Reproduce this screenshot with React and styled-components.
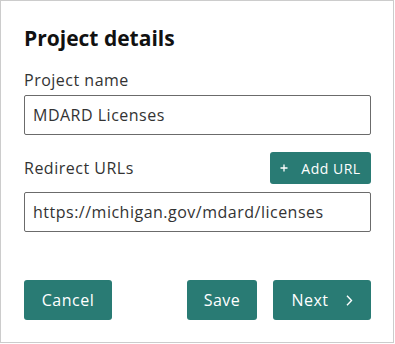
import React from 'react';
import styled, {createGlobalStyle} from 'styled-components';

const teal = '#297b74';

const Global = createGlobalStyle`
  body {
    margin: 0;
    background: #fff;
    font-family: "Open Sans", Arial, sans-serif;
  }
`;

const Card = styled.div`
  box-sizing: border-box;
  width: 394px;
  height: 343px;
  border: 1px solid #cccccc;
  padding: 23px 22px 0 23px;
  display: flex;
  flex-direction: column;
  color: #333;
`;

const Title = styled.h2`
  margin: 0 0 16px;
  font-size: 21px;
  line-height: 28px;
  font-weight: 700;
  color: #111;
`;

const Label = styled.label`
  font-size: 16px;
  line-height: 24px;
  letter-spacing: 0.5px;
  color: #333;
`;

const Input = styled.input`
  box-sizing: border-box;
  width: 100%;
  height: 40px;
  margin-top: ${p => p.$top || 0}px;
  padding: 0 8px;
  border: 1px solid #6b6b6b;
  border-radius: 2px;
  font-family: inherit;
  font-size: 16px;
  letter-spacing: 0.5px;
  color: #333;
  outline: none;
`;

const Row = styled.div`
  display: flex;
  align-items: center;
  justify-content: space-between;
  margin-top: 17px;
`;

const Button = styled.button`
  box-sizing: border-box;
  display: inline-flex;
  align-items: center;
  justify-content: center;
  gap: ${p => p.$gap || 0}px;
  width: ${p => p.$w}px;
  height: ${p => (p.$small ? 32 : 40)}px;
  padding: 0;
  border: none;
  border-radius: 3px;
  background: ${teal};
  color: #fff;
  font-family: inherit;
  font-size: ${p => (p.$small ? 14 : 16)}px;
  letter-spacing: 0.5px;
  cursor: pointer;
`;

const Footer = styled.div`
  display: flex;
  align-items: center;
  margin-top: 48px;
`;

const Spacer = styled.div`
  flex: 1;
`;

const Group = styled.div`
  display: flex;
  gap: 16px;
`;

const Plus = () => (
    <svg width="8" height="8" viewBox="0 0 8 8" fill="none" stroke="#fff" strokeWidth="1.3">
        <path d="M4 0.5v7M0.5 4h7"/>
    </svg>
);

const Chevron = () => (
    <svg width="7" height="11" viewBox="0 0 7 11" fill="none" stroke="#fff" strokeWidth="1.4">
        <path d="M1 0.8l4.5 4.7L1 10.2"/>
    </svg>
);

export default function App() {
    return (
        <Card>
            <Global/>
            <Title>Project details</Title>
            <Label>Project name</Label>
            <Input $top={3} defaultValue="MDARD Licenses"/>
            <Row>
                <Label>Redirect URLs</Label>
                <Button $small $w={101} $gap={13}><Plus/>Add URL</Button>
            </Row>
            <Input $top={8} defaultValue="https://michigan.gov/mdard/licenses"/>
            <Footer>
                <Button $w={88}>Cancel</Button>
                <Spacer/>
                <Group>
                    <Button $w={70}>Save</Button>
                    <Button $w={98} $gap={17}>Next<Chevron/></Button>
                </Group>
            </Footer>
        </Card>
    );
}
